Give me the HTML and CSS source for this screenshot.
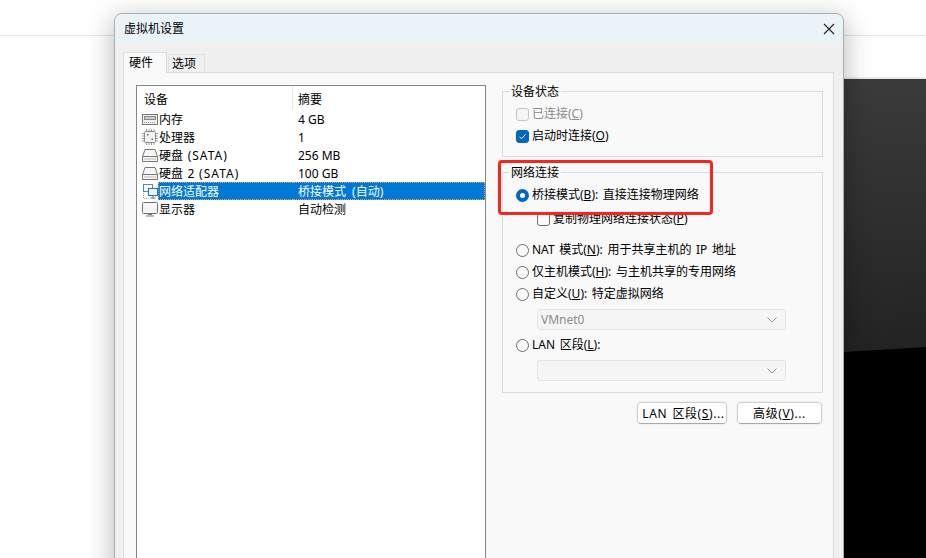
FILE: index.html
```html
<!DOCTYPE html>
<html lang="zh-CN">
<head>
<meta charset="utf-8">
<title>虚拟机设置</title>
<link rel="stylesheet" href="styles.css">
</head>
<body>
<div class="backdrop">
  <div class="top-strip"></div>
  <div class="dark-panel"></div>
</div>

<section class="dialog">
  <header class="titlebar">
    <span>虚拟机设置</span>
    <svg class="close" width="12" height="12" viewBox="0 0 12 12"><path d="M1 1l10 10M11 1L1 11" stroke="#222" stroke-width="1.1" fill="none"/></svg>
  </header>
  <div class="dialog-body">
    <nav class="tabs">
      <span class="tab tab-active">硬件</span>
      <span class="tab">选项</span>
    </nav>
    <div class="panel">
      <div class="device-list">
        <div class="list-head">
          <span class="col-device">设备</span>
          <span class="col-summary">摘要</span>
        </div>
        <div class="row">
          <span class="col-device">
            <svg class="icon" viewBox="0 0 16 16"><rect x="0.5" y="3.5" width="15" height="10" fill="#f2f2f2" stroke="#777"/><rect x="2.5" y="5.5" width="11" height="3" fill="#c9c9c9" stroke="#8a8a8a"/><path d="M2 11.5h12" stroke="#999" stroke-dasharray="1 1"/></svg>
            <span>内存</span>
          </span>
          <span class="col-summary">4 GB</span>
        </div>
        <div class="row">
          <span class="col-device">
            <svg class="icon" viewBox="0 0 16 16"><rect x="2.5" y="2.5" width="11" height="11" rx="1" fill="#f4f4f4" stroke="#8a8a8a"/><path d="M4.5 0v2M7 0v2M9.5 0v2M12 0v2M4.5 14v2M7 14v2M9.5 14v2M12 14v2M0 4.5h2M0 7h2M0 9.5h2M0 12h2M14 4.5h2M14 7h2M14 9.5h2M14 12h2" stroke="#9a9a9a"/><rect x="5" y="5" width="1.5" height="1.5" fill="#666"/><rect x="9.5" y="9.5" width="1.5" height="1.5" fill="#666"/></svg>
            <span>处理器</span>
          </span>
          <span class="col-summary">1</span>
        </div>
        <div class="row">
          <span class="col-device">
            <svg class="icon" viewBox="0 0 16 16"><path d="M3 2.5h10l2.5 7v5h-15v-5z" fill="#f6f6f6" stroke="#777"/><path d="M0.5 9.5h15" stroke="#777"/><path d="M2 12h12" stroke="#bbb"/></svg>
            <span>硬盘 <span class="caps">(SATA)</span></span>
          </span>
          <span class="col-summary">256 MB</span>
        </div>
        <div class="row">
          <span class="col-device">
            <svg class="icon" viewBox="0 0 16 16"><path d="M3 2.5h10l2.5 7v5h-15v-5z" fill="#f6f6f6" stroke="#777"/><path d="M0.5 9.5h15" stroke="#777"/><path d="M2 12h12" stroke="#bbb"/></svg>
            <span>硬盘 2 <span class="caps">(SATA)</span></span>
          </span>
          <span class="col-summary">100 GB</span>
        </div>
        <div class="row row-selected">
          <span class="col-device">
            <svg class="icon" viewBox="0 0 16 16"><rect x="1.5" y="1.5" width="9" height="7" fill="#fff" stroke="#3f8fc6"/><rect x="6.5" y="5.5" width="9" height="7" fill="#eaf4fb" stroke="#2f6f9f"/><path d="M11 13v1.5M8.5 15h5" stroke="#2f6f9f"/><path d="M1.5 10v5.5h5" stroke="#999" stroke-dasharray="1 1" fill="none"/></svg>
            <span class="selected-label">网络适配器</span>
          </span>
          <span class="col-summary">桥接模式 (自动)</span>
        </div>
        <div class="row">
          <span class="col-device">
            <svg class="icon" viewBox="0 0 16 16"><rect x="0.5" y="1.5" width="15" height="11" rx="1" fill="#f6f6f6" stroke="#6f6f6f"/><path d="M6 13.5h4M4 15h8" stroke="#777"/></svg>
            <span>显示器</span>
          </span>
          <span class="col-summary">自动检测</span>
        </div>
      </div>

      <div class="side">
        <fieldset class="group">
          <legend>设备状态</legend>
          <div class="option option-disabled"><span class="box"></span><span>已连接(<u>C</u>)</span></div>
          <div class="option"><span class="box box-on"><svg width="13" height="13" viewBox="0 0 13 13"><path d="M3.5 6.8l2 2 4-4.4" stroke="#fff" fill="none"/></svg></span><span>启动时连接(<u>O</u>)</span></div>
        </fieldset>

        <fieldset class="group group-net">
          <legend>网络连接</legend>
          <div class="option"><span class="radio radio-on"></span><span>桥接模式(<u>B</u>): 直接连接物理网络</span></div>
          <div class="option option-sub"><span class="box"></span><span>复制物理网络连接状态(<u>P</u>)</span></div>
          <div class="option option-gap"><span class="radio"></span><span>NAT 模式(<u>N</u>): 用于共享主机的 IP 地址</span></div>
          <div class="option"><span class="radio"></span><span>仅主机模式(<u>H</u>): 与主机共享的专用网络</span></div>
          <div class="option"><span class="radio"></span><span>自定义(<u>U</u>): 特定虚拟网络</span></div>
          <div class="select"><span>VMnet0</span><svg class="chev" width="10" height="6" viewBox="0 0 10 6"><path d="M0.5 0.5L5 5l4.5-4.5" stroke="#9a9a9a" fill="none"/></svg></div>
          <div class="option"><span class="radio"></span><span>LAN 区段(<u>L</u>):</span></div>
          <div class="select"><svg class="chev" width="10" height="6" viewBox="0 0 10 6"><path d="M0.5 0.5L5 5l4.5-4.5" stroke="#9a9a9a" fill="none"/></svg></div>
        </fieldset>

        <div class="actions">
          <button class="btn btn-lan" type="button">LAN 区段(<u>S</u>)...</button>
          <button class="btn btn-adv" type="button">高级(<u>V</u>)...</button>
        </div>
      </div>
    </div>
  </div>
  <div class="annotation"></div>
</section>
</body>
</html>
```

FILE: styles.css
```css
* { box-sizing: border-box; }
html, body { margin: 0; height: 100%; }
body {
  width: 926px;
  height: 558px;
  overflow: hidden;
  position: relative;
  background: #fff;
  font: 12px/18px "Noto Sans", "Noto Sans CJK SC", sans-serif;
  word-spacing: 1.5px;
  color: #000;
}
u { text-underline-offset: 1px; }
.caps { letter-spacing: 1px; }

.backdrop { display: flex; flex-direction: column; height: 558px; }
.top-strip { height: 36px; border-bottom: 1px solid #e4e4e4; }
.dark-panel {
  flex: 1;
  margin-top: 43px;
  margin-left: auto;
  width: 82px;
  box-shadow: 0 0 3px rgba(0,0,0,.3);
  background: linear-gradient(176.5deg, #3b3b3b 0, #232323 272px, #000 273px);
}

.dialog {
  position: absolute;
  left: 114px;
  top: 13px;
  width: 730px;
  height: 640px;
  display: flex;
  flex-direction: column;
  background: #f0f0f0;
  border: 1px solid #a9adb0;
  border-radius: 8px 8px 0 0;
  box-shadow: 0 6px 28px rgba(0,0,0,.3);
}
.titlebar {
  height: 30px;
  flex: none;
  display: flex;
  align-items: center;
  justify-content: space-between;
  padding: 0 8px 0 9px;
  background: #eaf3f8;
  border-radius: 7px 7px 0 0;
}
.close { display: block; }
.dialog-body { flex: 1; padding: 8px 9px 0 8px; display: flex; flex-direction: column; }

.tabs { display: flex; align-items: flex-end; height: 21px; flex: none; position: relative; z-index: 1; }
.tab {
  height: 18px;
  padding: 0 0 0 3px;
  width: 37px;
  margin-left: 1px;
  margin-bottom: 1px;
  line-height: 18px;
  background: #f0f0f0;
  border: 1px solid #e2e2e2;
  border-bottom: 0;
}
.tab-active {
  height: 21px;
  width: 44px;
  margin: 0;
  padding-left: 5px;
  background: #f9f9f9;
  border-color: #dcdcdc;
  line-height: 19px;
}
.panel {
  flex: 1;
  display: flex;
  gap: 16px;
  margin-top: -1px;
  padding: 12px 10px 0 12px;
  background: #f9f9f9;
  border: 1px solid #dcdcdc;
}

.device-list {
  width: 350px;
  flex: none;
  background: #fff;
  border: 1px solid #828790;
  height: 520px;
}
.list-head { display: flex; height: 24px; align-items: center; }
.list-head .col-device { padding: 4px 0 0 7px; border-right: 1px solid #e5e5e5; height: 24px; }
.col-device { width: 156px; flex: none; display: flex; align-items: center; gap: 1px; padding-left: 5px; white-space: nowrap; }
.list-head .col-summary { line-height: 28px; height: 24px; }
.col-summary { padding-left: 5px; white-space: pre; word-spacing: 0; }
.row { display: flex; height: 18px; align-items: center; }
.row .col-device > span, .row .col-summary { padding-top: 2px; }
.icon { width: 16px; height: 16px; flex: none; }

.row-selected { color: #fff; }
.row-selected .col-device { gap: 0; }
.row-selected .col-summary { flex: 1; background: #0078d7; height: 18px; border: 1px dotted #e0a060; border-left: 0; padding: 0 0 0 5px; line-height: 18px; word-spacing: 3px; }
.row .col-device > .selected-label { flex: 1; background: #0078d7; height: 18px; border: 1px dotted #e0a060; border-right: 0; padding: 0; line-height: 18px; }

.side { flex: 1; display: flex; flex-direction: column; margin-top: -2px; }
.group {
  margin: 0;
  padding: 4px 0 9px 13px;
  border: 1px solid #dcdcdc;
  min-width: 0;
}
.group legend { margin-left: -7px; padding: 0 2px; line-height: 18px; height: 16px; }
.group-net { margin-top: 7px; padding-bottom: 7px; }

.option { display: flex; align-items: center; height: 22px; white-space: pre; }
.option-disabled { color: #8a8a8a; }
.option-sub { margin: 2px 0 0 21px; }
.option-gap { margin-top: 9px; }

.box, .radio { width: 13px; height: 13px; flex: none; margin-right: 3px; background: #fafafa; border: 1px solid #6e6e6e; }
.box { border-radius: 3px; }
.option-disabled .box { border-color: #c4c4c4; background: #f5f5f5; }
.box-on { background: #0067c0; border-color: #0067c0; }
.box-on svg { display: block; margin: -1px; }
.radio { border-radius: 50%; }
.radio-on { background: #fff; border: 4px solid #0067c0; }

.select {
  display: flex;
  align-items: center;
  height: 21px;
  margin: 4px 0 4px 21px;
  width: 249px;
  padding: 0 8px 0 3px;
  background: #f5f5f5;
  border: 1px solid #e4e4e4;
  border-radius: 3px;
  color: #8c8c8c;
}
.select svg { margin-left: auto; }

.actions { display: flex; justify-content: flex-end; gap: 10px; margin-top: 9px; padding-right: 1px; }
.btn {
  height: 22px;
  padding: 2px 0 0;
  font: inherit;
  letter-spacing: .6px;
  word-spacing: 1.5px;
  color: #000;
  background: #fff;
  border: 1px solid #d0d0d0;
  border-bottom-color: #a8a8a8;
  border-radius: 4px;
  outline: 1px solid #f0f0f0;
  white-space: pre;
}
.btn-lan { width: 90px; padding-left: 3px; }
.btn-adv { width: 85px; }

.annotation {
  position: absolute;
  left: 383px;
  top: 146px;
  width: 215px;
  height: 55px;
  border: 3px solid #f7251c;
  border-radius: 4px;
}
```
